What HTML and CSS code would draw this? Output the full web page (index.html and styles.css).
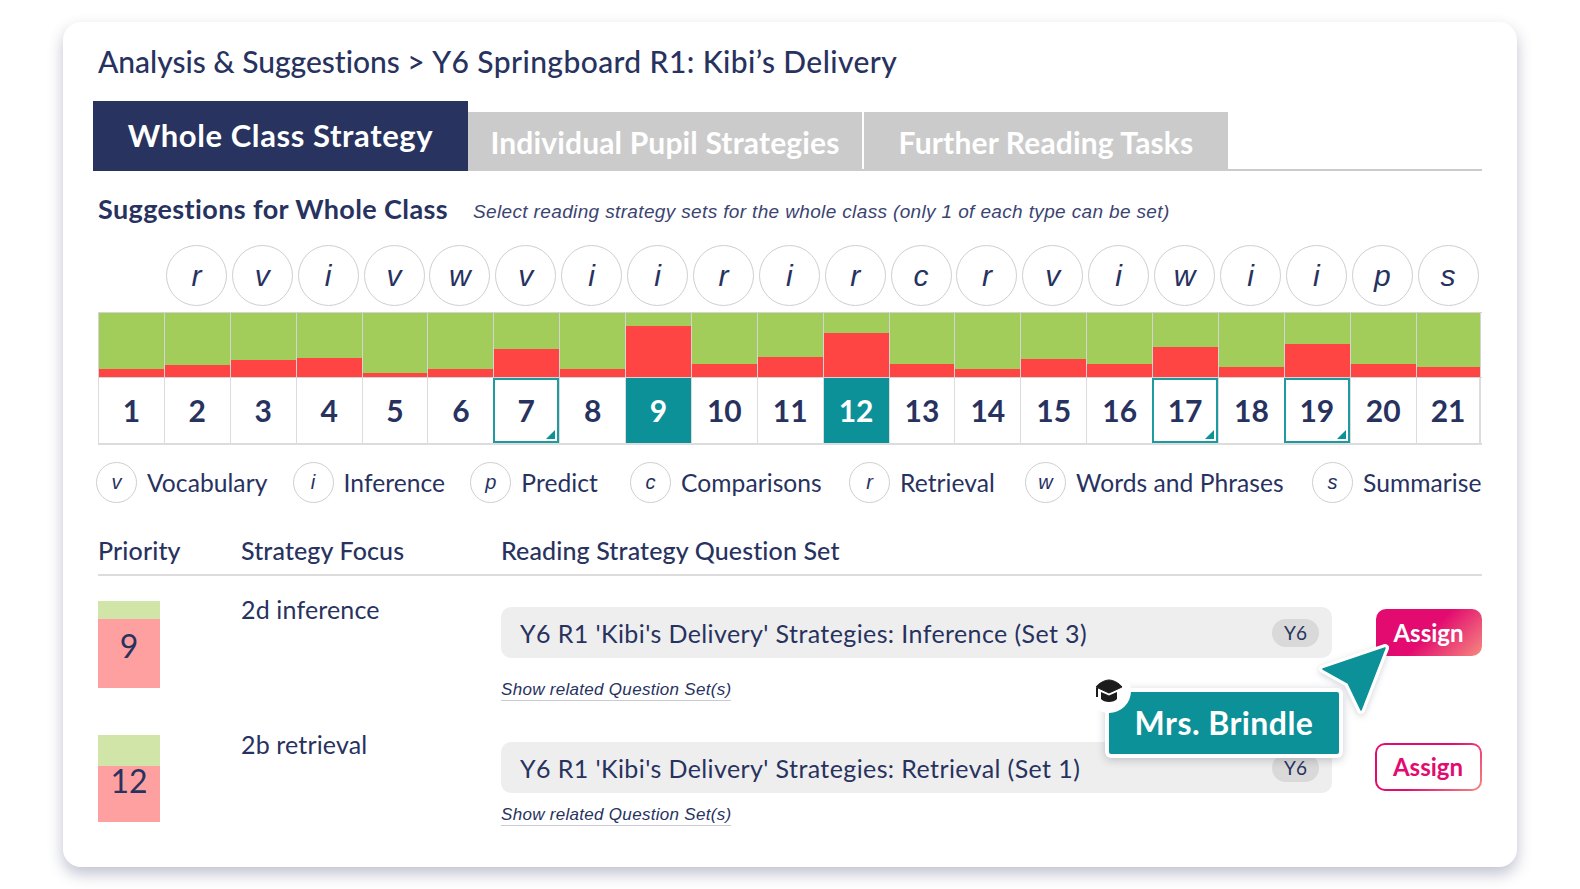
FILE: index.html
```html
<!DOCTYPE html>
<html lang="en">
<head>
<meta charset="UTF-8">
<title>Analysis &amp; Suggestions</title>
<link rel="stylesheet" href="styles.css">
</head>
<body>
<div class="card">
    <h1 class="title"><span class="crumb">Analysis &amp; Suggestions</span> &gt; <span class="crumb-current">Y6 Springboard R1: Kibi’s Delivery</span></h1>

    <div class="tabs">
        <div class="tab active">Whole Class Strategy</div>
        <div class="tab tab-pupil">Individual Pupil Strategies</div>
        <div class="tab tab-further">Further Reading Tasks</div>
    </div>

    <div class="subhead">
        <h2>Suggestions for Whole Class</h2>
        <p>Select reading strategy sets for the whole class (only 1 of each type can be set)</p>
    </div>

    <div class="letters">
        <span>r</span><span>v</span><span>i</span><span>v</span><span>w</span>
        <span>v</span><span>i</span><span>i</span><span>r</span><span>i</span>
        <span>r</span><span>c</span><span>r</span><span>v</span><span>i</span>
        <span>w</span><span>i</span><span>i</span><span>p</span><span>s</span>
    </div>

    <div class="bars">
        <div class="bar"><i style="height:13%"></i></div>
        <div class="bar"><i style="height:19%"></i></div>
        <div class="bar"><i style="height:26%"></i></div>
        <div class="bar"><i style="height:30%"></i></div>
        <div class="bar"><i style="height:7%"></i></div>
        <div class="bar"><i style="height:13%"></i></div>
        <div class="bar"><i style="height:43%"></i></div>
        <div class="bar"><i style="height:13%"></i></div>
        <div class="bar"><i style="height:79%"></i></div>
        <div class="bar"><i style="height:21%"></i></div>
        <div class="bar"><i style="height:31%"></i></div>
        <div class="bar"><i style="height:68%"></i></div>
        <div class="bar"><i style="height:21%"></i></div>
        <div class="bar"><i style="height:13%"></i></div>
        <div class="bar"><i style="height:28%"></i></div>
        <div class="bar"><i style="height:21%"></i></div>
        <div class="bar"><i style="height:47%"></i></div>
        <div class="bar"><i style="height:16%"></i></div>
        <div class="bar"><i style="height:52%"></i></div>
        <div class="bar"><i style="height:21%"></i></div>
        <div class="bar"><i style="height:16%"></i></div>
    </div>
    <div class="nums">
        <div class="num">1</div>
        <div class="num">2</div>
        <div class="num">3</div>
        <div class="num">4</div>
        <div class="num">5</div>
        <div class="num">6</div>
        <div class="num marked">7</div>
        <div class="num">8</div>
        <div class="num selected">9</div>
        <div class="num">10</div>
        <div class="num">11</div>
        <div class="num selected">12</div>
        <div class="num">13</div>
        <div class="num">14</div>
        <div class="num">15</div>
        <div class="num">16</div>
        <div class="num marked">17</div>
        <div class="num">18</div>
        <div class="num marked">19</div>
        <div class="num">20</div>
        <div class="num">21</div>
    </div>

    <div class="legend">
        <div class="legend-item"><span>v</span>Vocabulary</div>
        <div class="legend-item"><span>i</span>Inference</div>
        <div class="legend-item"><span>p</span>Predict</div>
        <div class="legend-item"><span>c</span>Comparisons</div>
        <div class="legend-item"><span>r</span>Retrieval</div>
        <div class="legend-item"><span>w</span>Words and Phrases</div>
        <div class="legend-item"><span>s</span>Summarise</div>
    </div>

    <div class="table-head">
        <div>Priority</div>
        <div>Strategy Focus</div>
        <div>Reading Strategy Question Set</div>
    </div>

    <div class="row">
        <div class="priority">
            <div class="priority-ok" style="height:21%"></div>
            <div class="priority-bad">9</div>
        </div>
        <div class="focus">2d inference</div>
        <div class="sets">
            <div class="set-line">
                <div class="set">Y6 R1 'Kibi's Delivery' Strategies: Inference (Set 3)<span class="badge">Y6</span></div>
                <button class="assign filled">Assign</button>
            </div>
            <a class="related">Show related Question Set(s)</a>
        </div>
    </div>

    <div class="row row-second">
        <div class="priority">
            <div class="priority-ok" style="height:36%"></div>
            <div class="priority-bad">12</div>
        </div>
        <div class="focus">2b retrieval</div>
        <div class="sets">
            <div class="set-line">
                <div class="set">Y6 R1 'Kibi's Delivery' Strategies: Retrieval (Set 1)<span class="badge">Y6</span></div>
                <button class="assign outline"><span>Assign</span></button>
            </div>
            <a class="related">Show related Question Set(s)</a>
        </div>
    </div>

    <svg class="pointer" width="76" height="76" viewBox="0 0 76 76">
        <path d="M67 4 L5 25 L30 39 L43 66 Z" fill="#ffffff" stroke="#ffffff" stroke-width="8" stroke-linejoin="round"/>
        <path d="M67 4 L5 25 L30 39 L43 66 Z" fill="#0c9199" stroke="#0c9199" stroke-width="1.5" stroke-linejoin="round"/>
    </svg>
    <div class="name-tag">Mrs. Brindle</div>
    <div class="cap">
        <svg width="28" height="26" viewBox="0 0 28 26">
            <path d="M14 2 C18 2 24 5 27 9 L14 15 L1 9 C4 5 10 2 14 2 Z" fill="#1c1c1c" stroke="#1c1c1c" stroke-linejoin="round"/>
            <path d="M6 14 L14 17.5 L22 14 V21 C19 25 9 25 6 21 Z" fill="#1c1c1c"/>
            <path d="M2 10 V19" stroke="#1c1c1c" stroke-width="2"/>
        </svg>
    </div>
</div>
</body>
</html>
```

FILE: styles.css
```css
* {
    box-sizing: border-box;
}

body {
    min-height: 100vh;
    margin: 0;
    padding: 22px 63px 0 63px;
    background-color: #ffffff;
    font-family: "Lato", "Noto Sans", sans-serif;
    color: #28325f;
}

.card {
    position: relative;
    height: 845px;
    padding: 17px 35.5px 0 35px;
    background-color: #ffffff;
    border-radius: 18px;
    box-shadow: 0 7px 15px rgba(60, 65, 110, 0.32);
}

.title {
    margin: 0;
    height: 45px;
    font-size: 30px;
    line-height: 45px;
    font-weight: 500;
}

.crumb {
    letter-spacing: -0.03px;
}

.crumb-current {
    letter-spacing: 0.4px;
}

.tabs {
    display: flex;
    align-items: flex-end;
    height: 70px;
    margin: 17px 0 0 -5px;
    border-bottom: 2px solid #cbcbcb;
}

.tab {
    display: flex;
    align-items: center;
    justify-content: center;
    height: 59px;
    margin-bottom: -2px;
    background-color: #cbcbcb;
    color: #ffffff;
    font-size: 30px;
    font-weight: 700;
    letter-spacing: 0.15px;
}

.tab.active {
    width: 375px;
    height: 70px;
    background-color: #28335f;
    padding-bottom: 3px;
    font-size: 31px;
    letter-spacing: 0.6px;
}

.tab-pupil {
    width: 394px;
}

.tab-further {
    width: 364px;
    margin-left: 2px;
}

.subhead {
    display: flex;
    align-items: center;
    height: 38px;
    margin-top: 18px;
}

.subhead h2 {
    margin: 0;
    font-size: 27px;
    font-weight: 700;
    letter-spacing: 0.38px;
}

.subhead p {
    margin: 8px 0 0 25px;
    font-family: "Liberation Sans", sans-serif;
    font-size: 19px;
    font-style: italic;
    letter-spacing: 0.36px;
    color: #3a4470;
}

.letters {
    display: grid;
    grid-template-columns: repeat(21, 1fr);
    height: 61px;
    margin-top: 18px;
}

.letters span {
    display: flex;
    align-items: center;
    justify-content: center;
    width: 61px;
    height: 61px;
    margin-left: 2px;
    border: 1px solid #cfcfcf;
    border-radius: 50%;
    font-family: "Liberation Sans", sans-serif;
    font-size: 30px;
    font-style: italic;
}

.letters span:first-child {
    grid-column-start: 2;
}

.bars,
.nums {
    display: grid;
    grid-template-columns: repeat(21, 1fr);
}

.bars {
    height: 65px;
    margin-top: 6px;
    border-top: 1px solid #d4d4d4;
}

.bar {
    display: flex;
    align-items: flex-end;
    background-color: #a2cd5a;
    border-left: 1px solid #d4d4d4;
}

.bar:last-child {
    border-right: 1px solid #d4d4d4;
}

.bar i {
    display: block;
    width: 100%;
    background-color: #ff4444;
}

.nums {
    height: 68px;
    border-top: 1px solid #d4d4d4;
    border-bottom: 2px solid #dcdcdc;
}

.num {
    position: relative;
    display: flex;
    align-items: center;
    justify-content: center;
    padding-bottom: 2px;
    border-left: 1px solid #dcdcdc;
    font-size: 30px;
    font-weight: 700;
}

.num:last-child {
    border-right: 2px solid #dcdcdc;
}

.num.selected {
    background-color: #0c9199;
    color: #ffffff;
}

.num.marked {
    border: 2px solid #1f9aa1;
}

.num.marked::after {
    content: "";
    position: absolute;
    right: 2px;
    bottom: 2px;
    border-style: solid;
    border-width: 0 0 9px 9px;
    border-color: transparent transparent #0c9199 transparent;
}

.legend {
    display: flex;
    justify-content: space-between;
    height: 40px;
    margin: 17px 0 0 -2px;
}

.legend-item {
    display: flex;
    align-items: center;
    font-size: 24.6px;
    letter-spacing: 0.05px;
}

.legend-item:nth-child(3) {
    margin-right: 7px;
}

.legend-item:nth-child(4) {
    margin-right: 2px;
}

.legend-item:nth-child(5) {
    margin-right: 5px;
}

.legend-item:nth-child(6) {
    margin-right: 3px;
}

.legend-item span {
    display: flex;
    align-items: center;
    justify-content: center;
    width: 41px;
    height: 41px;
    margin-right: 10px;
    border: 1px solid #cfcfcf;
    border-radius: 50%;
    font-family: "Liberation Sans", sans-serif;
    font-size: 20px;
    font-style: italic;
}

.table-head {
    display: grid;
    grid-template-columns: 143px 260px 1fr;
    height: 41px;
    margin-top: 33px;
    border-bottom: 2px solid #dcdcdc;
    font-size: 25px;
    font-weight: 500;
    letter-spacing: 0.13px;
    line-height: 31px;
}

.row {
    display: grid;
    grid-template-columns: 143px 260px 1fr;
    margin-top: 25px;
}

.row-second {
    margin-top: 34px;
}

.priority {
    display: flex;
    flex-direction: column;
    width: 62px;
    height: 87px;
}

.priority-ok {
    background-color: #d2e5a8;
}

.priority-bad {
    flex: 1;
    background-color: #ffa0a0;
    font-size: 32px;
    text-align: center;
    line-height: 54px;
}

.row-second .priority-bad {
    line-height: 30px;
}

.focus {
    margin-top: -2px;
    font-size: 25px;
    letter-spacing: 0.15px;
    line-height: 20px;
}

.row-second .focus {
    margin-top: -1px;
}

.sets {
    padding-top: 6px;
}

.row-second .sets {
    padding-top: 7px;
}

.set-line {
    display: flex;
    justify-content: space-between;
    align-items: center;
}

.set {
    display: flex;
    align-items: center;
    justify-content: space-between;
    width: 831px;
    height: 51px;
    padding: 0 13px 0 19px;
    background-color: #eeeeee;
    border-radius: 10px;
    font-size: 25px;
    letter-spacing: 0.4px;
}

.badge {
    display: flex;
    align-items: center;
    justify-content: center;
    width: 47px;
    height: 28px;
    background-color: #d9d9d9;
    border-radius: 14px;
    font-size: 19px;
    letter-spacing: 0;
}

.assign {
    width: 106px;
    height: 47px;
    padding: 0;
    border: none;
    border-radius: 10px;
    font-family: inherit;
    font-size: 24px;
    font-weight: 700;
    color: #ffffff;
    background: linear-gradient(135deg, #e30b6f 0%, #e30b6f 50%, #f58a80 100%);
}

.assign.outline {
    width: 107px;
    height: 48px;
    margin-top: -2px;
    padding: 2px;
    color: #e30b6f;
}

.assign.outline span {
    display: flex;
    align-items: center;
    justify-content: center;
    width: 100%;
    height: 100%;
    background-color: #ffffff;
    border-radius: 8px;
}

.related {
    display: inline-block;
    margin-top: 21px;
    font-family: "Liberation Sans", sans-serif;
    font-size: 17px;
    font-style: italic;
    letter-spacing: 0.3px;
    line-height: 21px;
    border-bottom: 1px solid #c9cbd6;
}

.row-second .related {
    margin-top: 11px;
}

.pointer {
    position: absolute;
    left: 1255px;
    top: 622px;
    filter: drop-shadow(0 2px 3px rgba(40, 50, 80, 0.2));
}

.name-tag {
    position: absolute;
    left: 1042px;
    top: 666px;
    display: flex;
    align-items: center;
    justify-content: center;
    width: 238px;
    height: 70px;
    padding-bottom: 2px;
    background-color: #0c9199;
    border: 4px solid #ffffff;
    border-radius: 6px;
    box-shadow: 0 2px 8px rgba(40, 50, 80, 0.25);
    color: #ffffff;
    font-size: 32px;
    font-weight: 700;
    letter-spacing: 0.45px;
}

.cap {
    position: absolute;
    left: 1024px;
    top: 647px;
    display: flex;
    align-items: center;
    justify-content: center;
    width: 44px;
    height: 44px;
    background-color: #ffffff;
    border-radius: 50%;
}
```
